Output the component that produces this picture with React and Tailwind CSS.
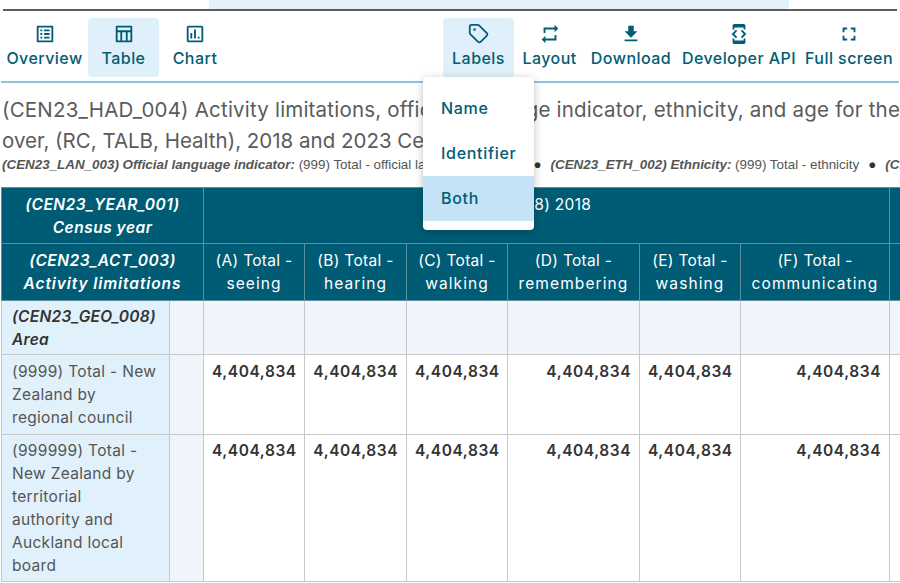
import React from 'react';
import { Tag } from 'lucide-react';

const Icon = ({ d }) => (
  <svg viewBox="0 0 24 24" className="h-[22px] w-[22px] fill-current"><path d={d} /></svg>
);

const paths = {
  overview: 'M19 5v14H5V5h14m1.1-2H3.9c-.5 0-.9.4-.9.9v16.2c0 .4.4.9.9.9h16.2c.4 0 .9-.5.9-.9V3.9c0-.5-.5-.9-.9-.9zM11 7h6v2h-6V7zm0 4h6v2h-6v-2zm0 4h6v2h-6zM7 7h2v2H7zm0 4h2v2H7zm0 4h2v2H7z',
  table: 'M20 3H4c-.6 0-1 .4-1 1v16c0 .6.4 1 1 1h16c.6 0 1-.4 1-1V4c0-.6-.4-1-1-1zm-1 2v3H5V5h14zM5 10h3v9H5v-9zm5 0h4v9h-4v-9zm6 9v-9h3v9h-3z',
  chart: 'M19 3H5c-1.1 0-2 .9-2 2v14c0 1.1.9 2 2 2h14c1.1 0 2-.9 2-2V5c0-1.1-.9-2-2-2zm0 16H5V5h14v14zM7 11h2v6H7zm4-4h2v10h-2zm4 8h2v2h-2z',
  layout: 'M7 7h10v3l4-4-4-4v3H5v6h2V7zm10 10H7v-3l-4 4 4 4v-3h12v-6h-2v4z',
  download: 'M19 9h-4V3H9v6H5l7 7 7-7zM5 18v2h14v-2H5z',
  api: 'M7 5h10v2h2V3c0-1.1-.9-1.99-2-1.99L7 1c-1.1 0-2 .9-2 2v4h2V5zm8.41 11.59L20 12l-4.59-4.59L14 8.83 17.17 12 14 15.17l1.41 1.42zM10 15.17L6.83 12 10 8.83 8.59 7.41 4 12l4.59 4.59L10 15.17zM17 19H7v-2H5v4c0 1.1.9 2 2 2h10c1.1 0 2-.9 2-2v-4h-2v2z',
  full: 'M7 14H5v5h5v-2H7v-3zm-2-4h2V7h3V5H5v5zm12 7h-3v2h5v-5h-2v3zM14 5v2h3v3h2V5h-5z',
};

const ToolButton = ({ label, icon, active, width }) => (
  <button className={`flex h-[59px] shrink-0 flex-col items-center justify-start rounded pt-[3px] text-[16px] font-medium leading-6 tracking-[0.45px] text-[#005d75] ${active ? 'bg-[#dff0fb]' : ''} ${width}`}>
    <span className="flex h-[25px] items-center">{icon}</span>
    <span className="whitespace-nowrap">{label}</span>
  </button>
);

const columns = [
  ['(A) Total -', 'seeing'],
  ['(B) Total -', 'hearing'],
  ['(C) Total -', 'walking'],
  ['(D) Total -', 'remembering'],
  ['(E) Total -', 'washing'],
  ['(F) Total -', 'communicating'],
];

const Values = ({ top }) => (
  <>
    {columns.map((col) => (
      <td key={col[1]} className={`border border-[#c8c8c8] bg-white px-2 align-top text-right text-[15.5px] font-semibold leading-[23px] tracking-[0.55px] text-[#333] ${top}`}>4,404,834</td>
    ))}
    <td className="border border-[#c8c8c8] bg-white" />
  </>
);

export default function App() {
  return (
    <div className="relative h-[583px] w-[900px] overflow-hidden bg-white font-['Inter',sans-serif]">
      <div className="ml-[209px] h-[9px] w-[580px] rounded-br bg-[#e3f1fb]" />
      <div className="mx-[3px] h-[2px] bg-[#5c5c5c]" />

      <div className="mx-[1px] flex h-[72px] items-start justify-between border-b-2 border-[#8fc1e3] pt-[7px] pr-[2px]">
        <div className="flex">
          <ToolButton label="Overview" width="w-[87px]" icon={<Icon d={paths.overview} />} />
          <ToolButton label="Table" width="w-[71px]" active icon={<Icon d={paths.table} />} />
          <ToolButton label="Chart" width="w-[72px]" icon={<Icon d={paths.chart} />} />
        </div>
        <div className="flex">
          <ToolButton label="Labels" width="w-[71px]" active icon={<Tag className="h-[21px] w-[21px]" strokeWidth={2} />} />
          <ToolButton label="Layout" width="w-[71px]" icon={<Icon d={paths.layout} />} />
          <ToolButton label="Download" width="w-[92px]" icon={<Icon d={paths.download} />} />
          <ToolButton label="Developer API" width="w-[124px]" icon={<Icon d={paths.api} />} />
          <ToolButton label="Full screen" width="w-[96px]" icon={<Icon d={paths.full} />} />
        </div>
      </div>

      <div className="h-[104px] overflow-hidden pl-[2px] pt-[11px]">
        <p className="w-[1100px] text-[20.5px] leading-[31px] tracking-[0.2px] text-[#5b5b5b]">(CEN23_HAD_004) Activity limitations, official language indicator, ethnicity, and age for the</p>
        <p className="w-[1100px] text-[20.5px] leading-[31px] text-[#5b5b5b]">over, (RC, TALB, Health), 2018 and 2023 Censuses</p>
        <p className="mt-[1px] w-[1100px] whitespace-nowrap font-['Liberation_Sans',sans-serif] text-[13.4px] leading-[16px] text-[#555]">
          <b className="italic">(CEN23_LAN_003) Official language indicator:</b> (999) Total - official language indicator
          <span className="mx-[9px] text-[#333]">●</span>
          <b className="italic">(CEN23_ETH_002) Ethnicity:</b> (999) Total - ethnicity
          <span className="mx-[9px] text-[#333]">●</span>
          <b className="italic">(CEN23_AGE_001) Age:</b>
        </p>
      </div>

      <table className="ml-[1px] w-[1000px] table-fixed border-collapse text-[15.5px] leading-[23px]">
        <colgroup>
          <col className="w-[168px]" />
          <col className="w-[34px]" />
          <col className="w-[101px]" />
          <col className="w-[102px]" />
          <col className="w-[101px]" />
          <col className="w-[132px]" />
          <col className="w-[101px]" />
          <col className="w-[149px]" />
          <col className="w-[112px]" />
        </colgroup>
        <thead className="text-white">
          <tr className="h-[56px] bg-[#005c75]">
            <th colSpan={2} className="border border-[#5d8f9f] px-1 text-center font-semibold italic tracking-[0.5px]">(CEN23_YEAR_001)<br />Census year</th>
            <th colSpan={6} className="border border-[#5d8f9f] pt-[5px] align-top text-center font-normal tracking-[0.3px]">(2018) 2018</th>
            <th className="border border-[#5d8f9f]" />
          </tr>
          <tr className="h-[57px] bg-[#005c75]">
            <th colSpan={2} className="border border-[#5d8f9f] px-0 text-center font-semibold italic tracking-[0.5px]">(CEN23_ACT_003)<br /><span className="tracking-[0.9px]">Activity limitations</span></th>
            {columns.map((col) => (
              <th key={col[1]} className="border border-[#5d8f9f] text-center font-normal tracking-[0.3px]">{col[0]}<br /><span className="tracking-[1.1px]">{col[1]}</span></th>
            ))}
            <th className="border border-[#5d8f9f]" />
          </tr>
        </thead>
        <tbody className="text-[#555]">
          <tr className="h-[54px]">
            <td className="border border-[#c8c8c8] bg-[#e0f1fb] px-[10px] font-semibold italic tracking-[0.3px] text-[#333]">(CEN23_GEO_008)<br />Area</td>
            <td className="border border-[#c8c8c8] bg-[#f1f5fb]" />
            {columns.map((col) => (
              <td key={col[1]} className="border border-[#c8c8c8] bg-[#f1f5fb]" />
            ))}
            <td className="border border-[#c8c8c8] bg-[#f1f5fb]" />
          </tr>
          <tr className="h-[80px]">
            <td className="border border-[#c8c8c8] bg-[#e0f1fb] px-[10px] pt-[5px] align-top tracking-[0.3px]">(9999) Total - New<br />Zealand by<br />regional council</td>
            <td className="border border-[#c8c8c8] bg-[#f1f5fb]" />
            <Values top="pt-[5px]" />
          </tr>
          <tr className="h-[147px]">
            <td className="border border-[#c8c8c8] bg-[#e0f1fb] px-[10px] pt-[4px] align-top tracking-[0.3px]">(999999) Total -<br />New Zealand by<br />territorial<br />authority and<br />Auckland local<br />board</td>
            <td className="border border-[#c8c8c8] bg-[#f1f5fb]" />
            <Values top="pt-[4px]" />
          </tr>
        </tbody>
      </table>

      <div className="absolute left-[423px] top-[77px] w-[111px] rounded bg-white pb-[9px] text-[16px] font-medium tracking-[0.7px] text-[#005d75] shadow-[0_2px_8px_rgba(0,0,0,0.25)]">
        <div className="flex h-[54px] items-end pb-[11px] pl-[18px]">Name</div>
        <div className="flex h-[45px] items-center pb-[2px] pl-[18px]">Identifier</div>
        <div className="flex h-[45px] items-center bg-[#c5e3f7] pb-[2px] pl-[18px]">Both</div>
      </div>
    </div>
  );
}
